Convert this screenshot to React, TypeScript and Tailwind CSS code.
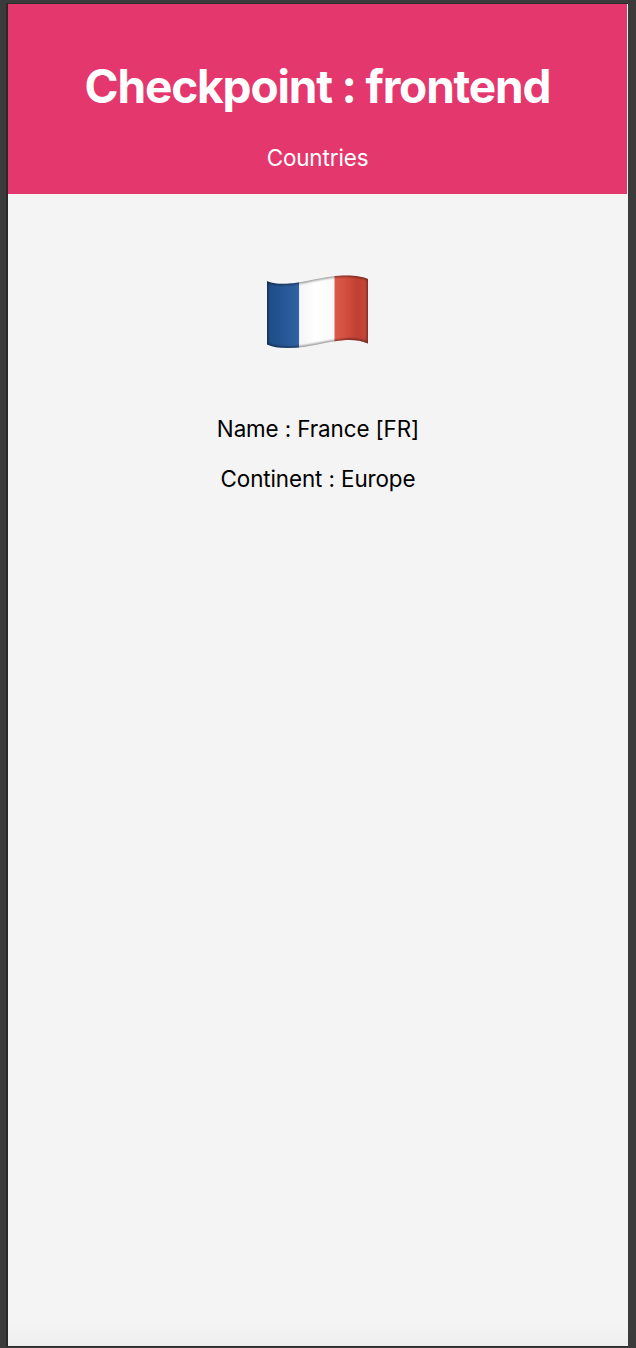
function FrenchFlag() {
  const outline =
    "M1 6 C5 8 11 9 20 8.8 C39 8.2 56 1 77 .5 C88 .2 97 1.5 102 4 V68.5 C95 65.5 88 64.5 80 65 C60 66 45 73 22 73 C13 73 6 72 1 69.5 Z";
  return (
    <svg className="mr-[2px] block h-[74px] w-[103px]" viewBox="0 0 103 74" role="img" aria-label="France">
      <defs>
        <linearGradient id="blue">
          <stop offset="0" stopColor="#1f4b85" />
          <stop offset=".35" stopColor="#24528f" />
          <stop offset="1" stopColor="#2f63a4" />
        </linearGradient>
        <linearGradient id="white">
          <stop offset="0" stopColor="#f4f4f5" />
          <stop offset=".45" stopColor="#ffffff" />
          <stop offset="1" stopColor="#fafafa" />
        </linearGradient>
        <linearGradient id="red">
          <stop offset="0" stopColor="#dc5a4c" />
          <stop offset=".3" stopColor="#d4503f" />
          <stop offset=".68" stopColor="#bd4032" />
          <stop offset="1" stopColor="#cb4a3b" />
        </linearGradient>
        <clipPath id="shape">
          <path d={outline} />
        </clipPath>
        <filter id="soft" x="-10%" y="-10%" width="120%" height="120%">
          <feGaussianBlur stdDeviation="1" />
        </filter>
      </defs>
      <g clipPath="url(#shape)">
        <path fill="url(#blue)" d="M0 0H33.2V74H0z" />
        <path fill="url(#white)" d="M33.2 0H68.5V74H33.2z" />
        <path fill="url(#red)" d="M68.5 0H103V74H68.5z" />
        <path d={outline} fill="none" stroke="#000" strokeOpacity=".45" strokeWidth="2.6" filter="url(#soft)" />
      </g>
    </svg>
  );
}

export default function App() {
  return (
    <div className="flex h-[1348px] w-[636px] bg-[#3b3b3b] pt-[3px] pb-px pl-[6px] font-['Inter',sans-serif] text-[22.4px] leading-[28px] tracking-[-0.1px]">
      <div className="flex w-[622px] flex-col border-t border-b border-l-2 border-[#2a2a2a] bg-[#f4f4f4]">
        <header className="flex h-[190px] shrink-0 flex-col items-center border-r border-[#f4f4f4] bg-[#e4376d] pt-[54px] text-white">
          <h1 className="text-[46px] leading-[56px] font-bold tracking-[-1.17px] whitespace-nowrap">Checkpoint : frontend</h1>
          <p className="mt-[30px]">Countries</p>
        </header>
        <main className="flex flex-1 flex-col items-center bg-linear-to-b from-[#f4f4f4] from-98% to-[#eeeeee] pt-[81px] text-black">
          <FrenchFlag />
          <p className="mt-[66px]">Name : France [FR]</p>
          <p className="mt-[22px]">Continent : Europe</p>
        </main>
      </div>
    </div>
  );
}
